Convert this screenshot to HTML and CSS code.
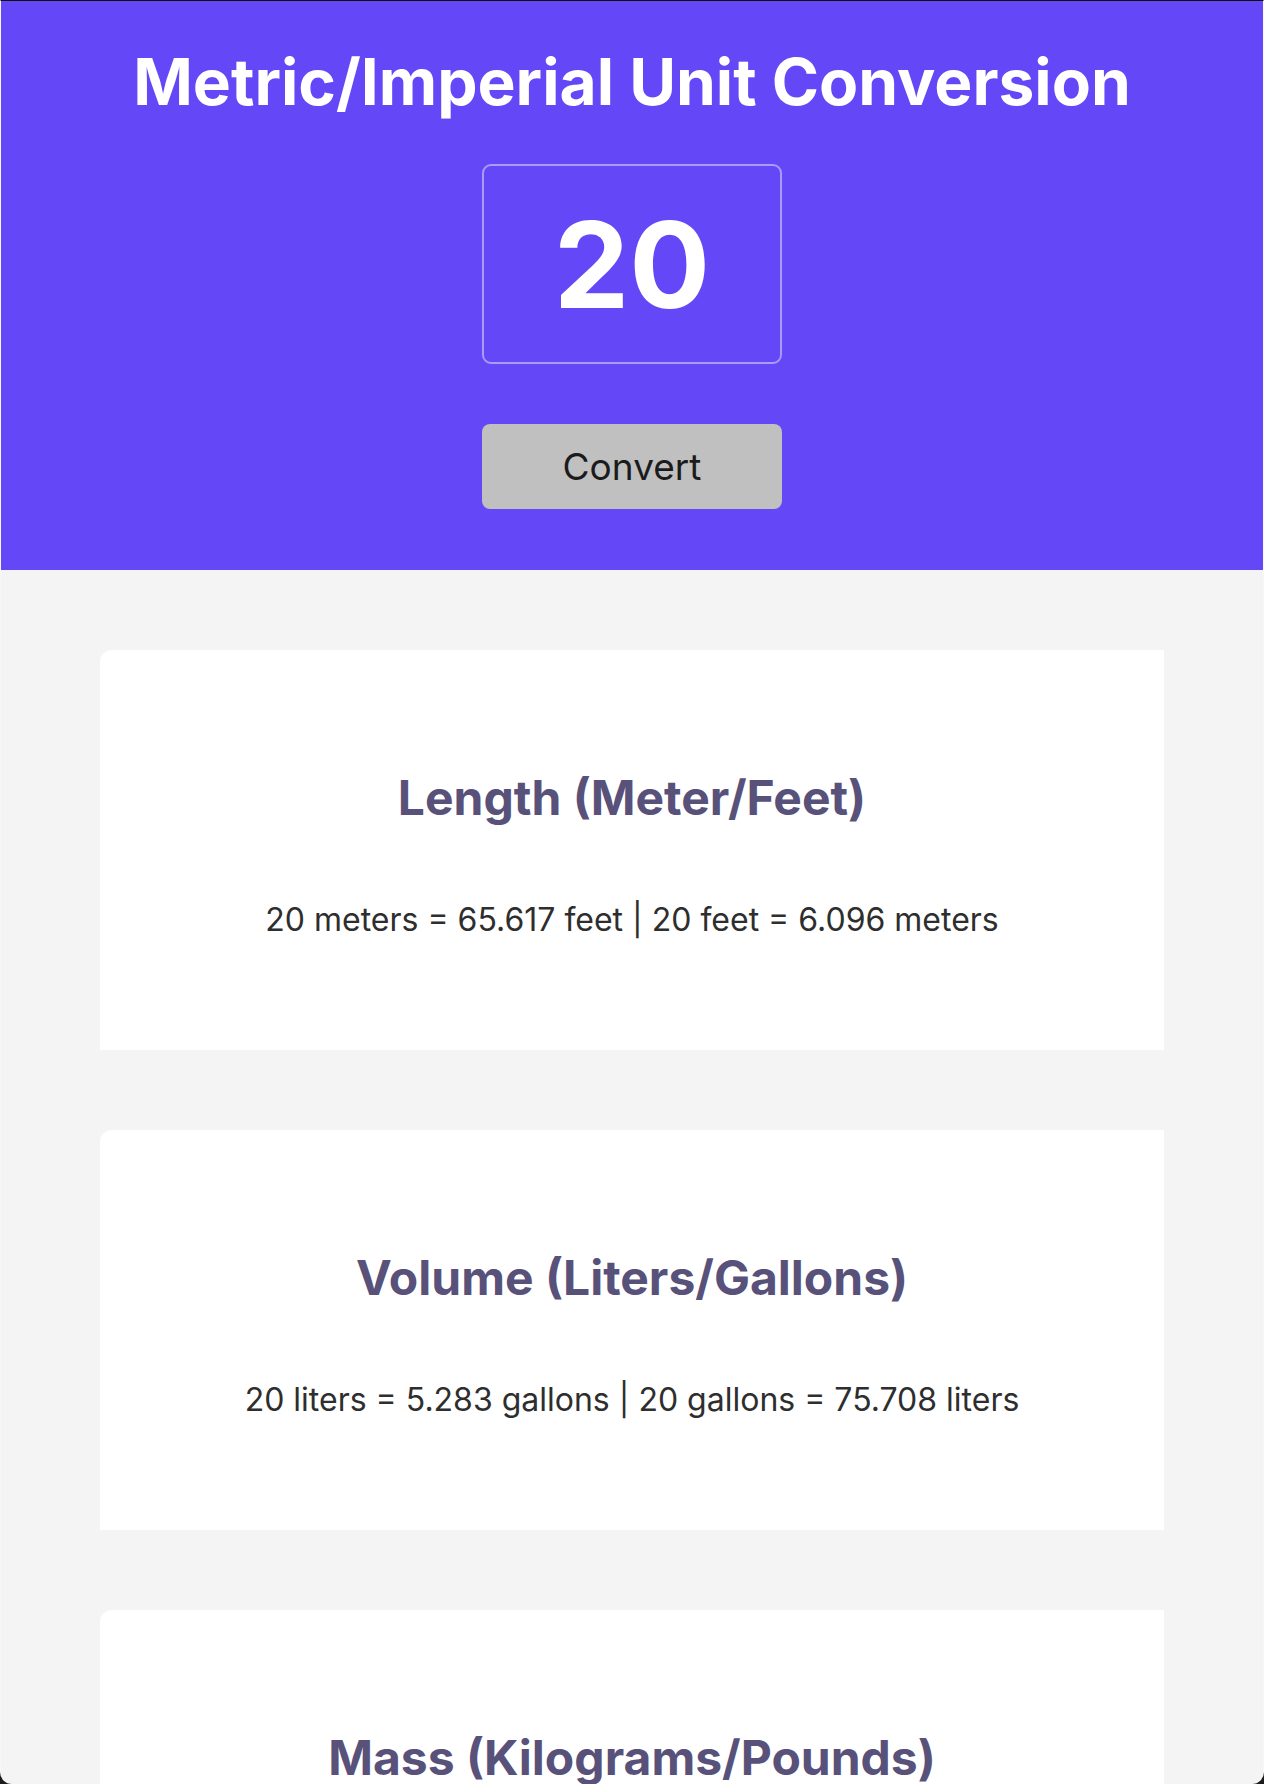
FILE: index.html
```html
<!DOCTYPE html>
<html lang="en">
<head>
<meta charset="utf-8">
<title>Metric/Imperial Unit Conversion</title>
<link rel="stylesheet" href="styles.css">
</head>
<body>
<div class="window">
  <header class="hero">
    <h1 class="hero-title">Metric/Imperial Unit Conversion</h1>
    <input class="hero-input" type="text" value="20" aria-label="Value">
    <button class="hero-button" type="button">Convert</button>
  </header>
  <main class="results">
    <section class="card">
      <h2 class="card-title">Length (Meter/Feet)</h2>
      <p class="card-text">20 meters = 65.617 feet | 20 feet = 6.096 meters</p>
    </section>
    <section class="card">
      <h2 class="card-title">Volume (Liters/Gallons)</h2>
      <p class="card-text">20 liters = 5.283 gallons | 20 gallons = 75.708 liters</p>
    </section>
    <section class="card">
      <h2 class="card-title">Mass (Kilograms/Pounds)</h2>
      <p class="card-text">20 kilos = 44.092 pounds | 20 pounds = 9.072 kilos</p>
    </section>
  </main>
</div>
</body>
</html>
```
FILE: styles.css
```css
html, body {
  margin: 0;
  padding: 0;
  background: #1c1c1c;
}
body {
  font-family: Inter, "Noto Sans", sans-serif;
}
.window {
  height: 1784px;
  box-sizing: border-box;
  overflow: hidden;
  background: #f4f4f4;
  border-top: 1px solid #111;
  border-left: 1px solid rgba(255, 255, 255, 0.3);
  border-right: 1px solid rgba(255, 255, 255, 0.3);
  border-radius: 0 0 12px 12px;
}
.hero {
  background: #6447f6;
  height: 569px;
  box-sizing: border-box;
  padding-top: 42px;
  display: flex;
  flex-direction: column;
  align-items: center;
}
.hero-title {
  margin: 0;
  color: #fff;
  font-size: 64px;
  font-weight: 700;
  line-height: 77px;
}
.hero-input {
  margin-top: 44px;
  width: 300px;
  height: 200px;
  box-sizing: border-box;
  border: 2px solid #a99cf8;
  border-radius: 9px;
  background: transparent;
  color: #fff;
  font-family: Inter, "Noto Sans", sans-serif;
  font-size: 120px;
  font-weight: 700;
  text-align: center;
  padding: 0;
  outline: none;
}
.hero-button {
  margin-top: 60px;
  width: 300px;
  height: 85px;
  border: none;
  border-radius: 8px;
  background: #c0c0c0;
  color: #1b1b1b;
  font-family: Inter, "Noto Sans", sans-serif;
  font-size: 37px;
  font-weight: 400;
  padding: 0;
}
.results {
  display: flex;
  flex-direction: column;
  gap: 80px;
  padding: 80px 99px 0 99px;
}
.card {
  flex: none;
  height: 400px;
  box-sizing: border-box;
  background: #fff;
  border-top-left-radius: 12px;
  padding-top: 119px;
  text-align: center;
}
.card-title {
  margin: 0;
  color: #58517a;
  font-size: 48px;
  font-weight: 700;
  line-height: 58px;
}
.card-text {
  margin: 75px 0 0;
  color: #2e2e2e;
  font-size: 32px;
  line-height: 36px;
}
```
